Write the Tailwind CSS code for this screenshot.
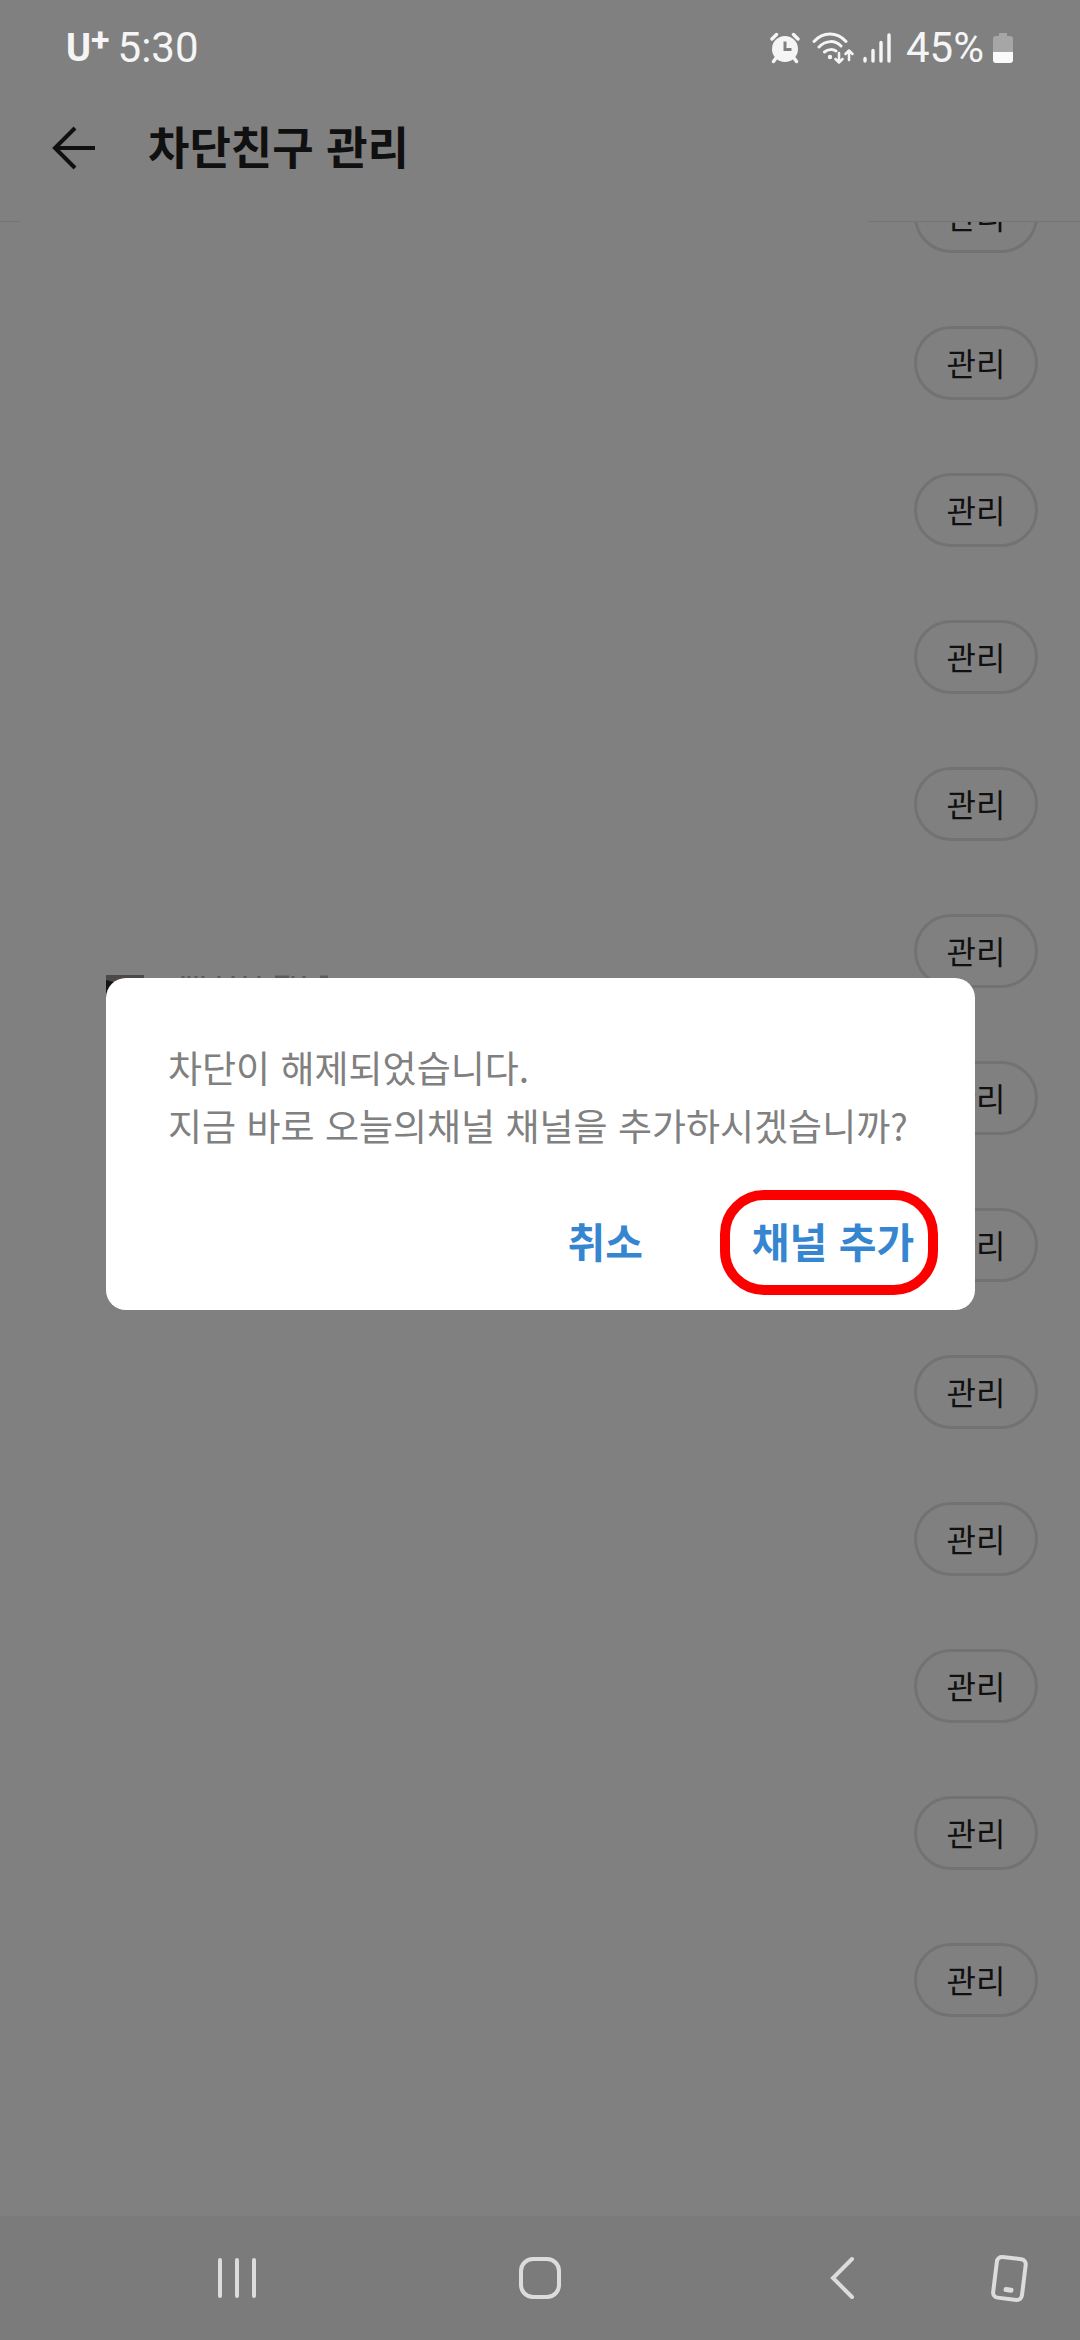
<!DOCTYPE html>
<html lang="ko">
<head>
<meta charset="utf-8">
<meta name="viewport" content="width=device-width, initial-scale=1">
<title>차단친구 관리</title>
<script src="https://cdn.jsdelivr.net/npm/@tailwindcss/browser@4"></script>
</head>
<body class="bg-[#808080] font-['Noto_Sans_CJK_KR',sans-serif] text-[#101010]">
<div class="relative flex h-screen flex-col overflow-hidden">

  <!-- Status bar -->
  <div class="flex h-24 shrink-0 items-center justify-between pl-[66px] pr-[66px] font-['Roboto',sans-serif] text-[42px] leading-none text-[#f5f5f5]">
    <div class="flex items-center gap-2">
      <span class="flex items-start font-bold"><span class="text-[38px] leading-[42px]">U</span><span class="text-[34px] leading-6">+</span></span>
      <span>5:30</span>
    </div>
    <div class="flex items-center">
      <svg class="h-[32px] w-[30px]" viewBox="0 0 30 32" fill="none">
        <circle cx="15" cy="17" r="13" fill="#f5f5f5"/>
        <path d="M2 7 6.500 2.500M28 7 23.500 2.500M6 26 3.500 29.500M24 26 26.500 29.500" stroke="#f5f5f5" stroke-width="3.400" stroke-linecap="round"/>
        <path d="M15 9.500V17.500H21.500" stroke="#808080" stroke-width="3"/>
      </svg>
      <svg class="ml-3 h-[32px] w-[42px]" viewBox="0 0 42 32" fill="none" stroke="#f5f5f5" stroke-width="3" stroke-linecap="round" stroke-linejoin="round">
        <path d="M2 9.500C11-.5 25-.5 34 9.500M7 15C14 8 23 8 29 14M12.500 20C16 17 21 17 24 19"/>
        <circle cx="18" cy="25" r="2.200" fill="#f5f5f5" stroke="none"/>
        <path d="M27 21V30M23.500 27 27 30.500 30.500 27M37 28V19M33.500 22 37 18.500 40.500 22" stroke-width="2.500"/>
      </svg>
      <svg class="ml-2 h-[32px] w-[30px]" viewBox="0 0 30 32" stroke="#f5f5f5" stroke-width="3.400" stroke-linecap="round">
        <path d="M3 26.500V29M11 18.500V29M19 10.500V29M27 3V29"/>
      </svg>
      <span class="ml-[14px]">45%</span>
      <svg class="ml-2 h-[32px] w-[22px]" viewBox="0 0 22 32">
        <path d="M7 1h8v3h3q3 0 3 3v14H1V7q0-3 3-3h3z" fill="#a6a6a6"/>
        <path d="M1 20h20v8q0 3-3 3H4q-3 0-3-3z" fill="#fafafa"/>
      </svg>
    </div>
  </div>

  <!-- App bar -->
  <header class="flex h-[125px] shrink-0 items-start gap-[50px] pl-[50px] pt-5">
    <button type="button" aria-label="뒤로" class="flex h-16 w-12 items-center justify-center">
      <svg class="h-12 w-12" viewBox="0 0 48 48" fill="none" stroke="#101010" stroke-width="4"><path d="M45 24H6M25 4 5 24 25 44"/></svg>
    </button>
    <h1 class="text-[45px] font-bold leading-[60px]">차단친구 관리</h1>
  </header>
  <div class="flex shrink-0 justify-between">
    <div class="h-px w-5 bg-[#757575]"></div>
    <div class="h-px w-[212px] bg-[#757575]"></div>
  </div>

  <!-- Blocked friends -->
  <main class="min-h-0 flex-1 overflow-hidden">
    <ul class="-mt-[43px] flex flex-col gap-[73px] pr-[42px] text-[32px]">
      <li class="flex justify-end"><button type="button" class="h-[74px] w-[124px] rounded-full border-3 border-[#727272] pb-[3px]">관리</button></li>
      <li class="flex justify-end"><button type="button" class="h-[74px] w-[124px] rounded-full border-3 border-[#727272] pb-[3px]">관리</button></li>
      <li class="flex justify-end"><button type="button" class="h-[74px] w-[124px] rounded-full border-3 border-[#727272] pb-[3px]">관리</button></li>
      <li class="flex justify-end"><button type="button" class="h-[74px] w-[124px] rounded-full border-3 border-[#727272] pb-[3px]">관리</button></li>
      <li class="flex justify-end"><button type="button" class="h-[74px] w-[124px] rounded-full border-3 border-[#727272] pb-[3px]">관리</button></li>
      <li class="flex justify-end"><button type="button" class="h-[74px] w-[124px] rounded-full border-3 border-[#727272] pb-[3px]">관리</button></li>
      <li class="flex justify-end"><button type="button" class="h-[74px] w-[124px] rounded-full border-3 border-[#727272] pb-[3px]">관리</button></li>
      <li class="flex justify-end"><button type="button" class="h-[74px] w-[124px] rounded-full border-3 border-[#727272] pb-[3px]">관리</button></li>
      <li class="flex justify-end"><button type="button" class="h-[74px] w-[124px] rounded-full border-3 border-[#727272] pb-[3px]">관리</button></li>
      <li class="flex justify-end"><button type="button" class="h-[74px] w-[124px] rounded-full border-3 border-[#727272] pb-[3px]">관리</button></li>
      <li class="flex justify-end"><button type="button" class="h-[74px] w-[124px] rounded-full border-3 border-[#727272] pb-[3px]">관리</button></li>
      <li class="flex justify-end"><button type="button" class="h-[74px] w-[124px] rounded-full border-3 border-[#727272] pb-[3px]">관리</button></li>
      <li class="flex justify-end"><button type="button" class="h-[74px] w-[124px] rounded-full border-3 border-[#727272] pb-[3px]">관리</button></li>
    </ul>
  </main>

  <!-- System navigation -->
  <nav class="flex h-[124px] shrink-0 items-center bg-[#7b7b7b] pl-[214px] pr-[46px]">
    <button type="button" aria-label="최근 앱"><svg class="h-12 w-12" viewBox="0 0 48 48" stroke="#dcdcdc" stroke-width="4" stroke-linecap="round"><path d="M6 6V42M23 6V42M40 6V42"/></svg></button>
    <button type="button" aria-label="홈" class="ml-[254px]"><svg class="h-12 w-12" viewBox="0 0 48 48" fill="none" stroke="#dcdcdc" stroke-width="4"><rect x="5" y="5" width="38" height="38" rx="12"/></svg></button>
    <button type="button" aria-label="뒤로 가기" class="ml-[254px]"><svg class="h-12 w-12" viewBox="0 0 48 48" fill="none" stroke="#dcdcdc" stroke-width="4" stroke-linecap="round"><path d="M34 5 15 24 34 43"/></svg></button>
    <button type="button" aria-label="화면 도구" class="ml-auto"><svg class="h-12 w-12" viewBox="0 0 48 48" fill="none" stroke="#dcdcdc" stroke-width="4"><g transform="rotate(7 24 24)"><rect x="9" y="4" width="29" height="41" rx="5"/><path d="M21.500 36H26.500" stroke-width="5" stroke-linecap="round"/></g></svg></button>
  </nav>

  <!-- Confirmation dialog -->
  <div class="absolute inset-0 flex items-center pb-[52px] pl-[106px] pr-[105px]">
    <div class="relative w-full">
      <!-- Top edge of the row behind the dialog -->
      <svg class="absolute -top-[3px] left-0 h-8 w-60" viewBox="0 0 240 32" aria-hidden="true">
        <path d="M0 0H38V10H0z" fill="#4c4846"/>
        <path d="M0 5 20 10 10 32H0z" fill="#141414"/>
        <path d="M77 1v3M83 1v3M90 1v3M97 1v3M113 1v3M127 1v3M139 1v3M153 1v3M169 2h14M187 1v3M198 1v3M214 2h8" stroke="#5c5c5c" stroke-width="3"/>
      </svg>
      <section role="dialog" aria-modal="true" aria-labelledby="message" class="relative h-[332px] w-full rounded-[20px] bg-white pl-[62px] pr-[37px] pt-[60px]">
        <p id="message" class="whitespace-nowrap text-[37px] leading-[58px] text-[#808080]">차단이 해제되었습니다.<br>지금 바로 오늘의채널 채널을 추가하시겠습니까?</p>
        <div class="mt-9 flex justify-end gap-[61px] text-[41px] font-bold text-[#3585d0]">
          <button type="button" class="px-4 pb-1">취소</button>
          <button type="button" class="h-[105px] w-[218px] whitespace-nowrap rounded-[44px] border-10 border-[#fc0000] pb-1 pl-2">채널 추가</button>
        </div>
      </section>
    </div>
  </div>
</div>
</body>
</html>
